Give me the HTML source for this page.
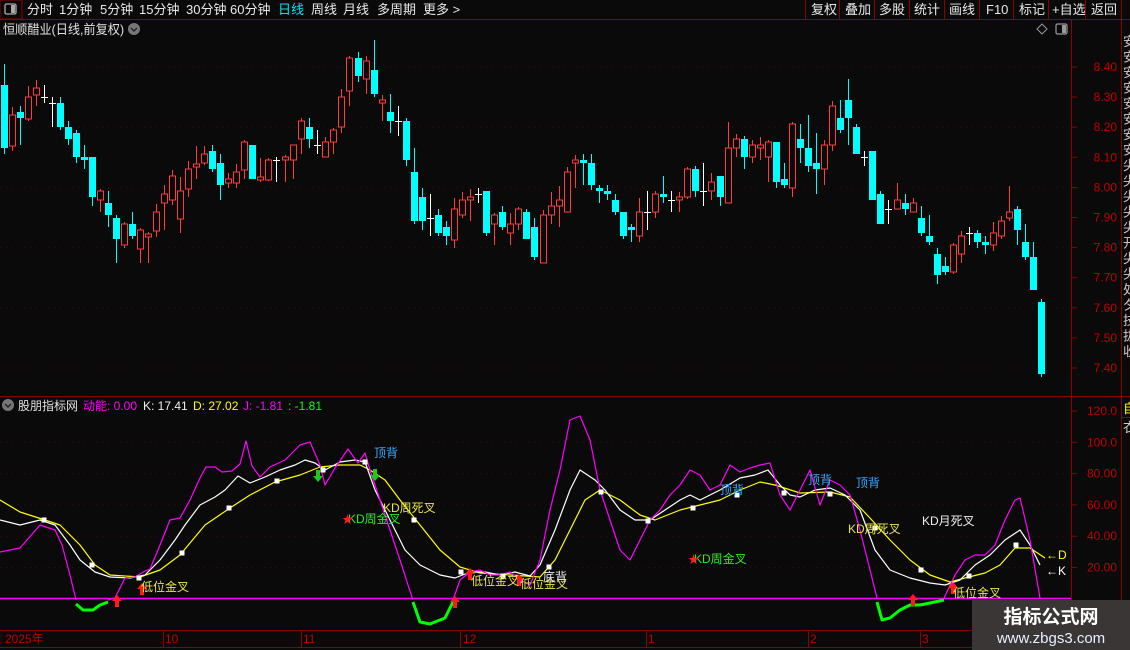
<!DOCTYPE html>
<html><head><meta charset="utf-8">
<style>
*{margin:0;padding:0;box-sizing:border-box}
body{width:1130px;height:650px;background:#0a0a0a;overflow:hidden;font-family:"Liberation Sans","Noto Sans CJK SC",sans-serif;position:relative;color:#ddd}
svg{position:absolute;left:0;top:0}
</style></head><body>
<svg id="s" width="1130" height="650" xmlns="http://www.w3.org/2000/svg" font-family="Liberation Sans, Noto Sans CJK SC, sans-serif">
<rect x="0" y="0" width="1130" height="19" fill="#0a0a0a"/>
<line x1="0" y1="19.5" x2="1130" y2="19.5" stroke="#8b0000"/>
<rect x="0" y="0" width="22" height="19" fill="none" stroke="#8b0000"/>
<rect x="5" y="4" width="11" height="10" rx="1.5" fill="none" stroke="#aaa" stroke-width="1.3"/>
<rect x="11" y="5" width="4" height="8" fill="#aaa"/>
<g font-size="13" fill="#e8e8e8">
<text x="27" y="14">分时</text><text x="59" y="14">1分钟</text><text x="100" y="14">5分钟</text>
<text x="139" y="14">15分钟</text><text x="186" y="14">30分钟</text><text x="230" y="14">60分钟</text>
<text x="278" y="14" fill="#00e5ff">日线</text><text x="311" y="14">周线</text><text x="343" y="14">月线</text>
<text x="377" y="14">多周期</text><text x="423" y="14">更多 &gt;</text>
</g>
<g stroke="#8b0000"><line x1="805.5" y1="0" x2="805.5" y2="19"/><line x1="839.5" y1="0" x2="839.5" y2="19"/><line x1="874.5" y1="0" x2="874.5" y2="19"/><line x1="909.5" y1="0" x2="909.5" y2="19"/><line x1="944.5" y1="0" x2="944.5" y2="19"/><line x1="979.5" y1="0" x2="979.5" y2="19"/><line x1="1013.5" y1="0" x2="1013.5" y2="19"/><line x1="1048.5" y1="0" x2="1048.5" y2="19"/><line x1="1085.5" y1="0" x2="1085.5" y2="19"/><line x1="1121.5" y1="0" x2="1121.5" y2="19"/></g>
<g font-size="13" fill="#e8e8e8">
<text x="811" y="14">复权</text><text x="845" y="14">叠加</text><text x="879" y="14">多股</text><text x="914" y="14">统计</text><text x="949" y="14">画线</text><text x="986" y="14">F10</text><text x="1019" y="14">标记</text><text x="1052" y="14">+自选</text><text x="1091" y="14">返回</text>
</g>
<text x="3" y="34" font-size="13" fill="#e0e0e0" textLength="121" lengthAdjust="spacingAndGlyphs">恒顺醋业(日线,前复权)</text>
<circle cx="134" cy="29" r="6" fill="#777"/><path d="M131 28l3 3 3-3" stroke="#222" stroke-width="1.4" fill="none"/>
<path d="M1042 24l5 5-5 5-5-5z" stroke="#999" fill="none"/>
<rect x="1056" y="24" width="11" height="10" rx="1.5" fill="none" stroke="#999" stroke-width="1.2"/><rect x="1062" y="25" width="4" height="8" fill="#999"/>
<line x1="1071.5" y1="19" x2="1071.5" y2="650" stroke="#8b0000"/>
<line x1="1121.5" y1="20" x2="1121.5" y2="650" stroke="#8b0000"/>
<g id="pax" font-size="12" fill="#c00000"></g>
<g font-size="13" fill="#ccc" id="rs"></g>
<line x1="0" y1="396.5" x2="1130" y2="396.5" stroke="#8b0000"/>
<circle cx="8" cy="405" r="6" fill="#777"/><path d="M5 404l3 3 3-3" stroke="#222" stroke-width="1.4" fill="none"/>
<g font-size="12">
<text x="18" y="410" fill="#e0e0e0">股朋指标网</text>
<text x="83" y="410" fill="#ff00ff">动能: 0.00</text>
<text x="143" y="410" fill="#eee">K: 17.41</text>
<text x="193" y="410" fill="#ffff00">D: 27.02</text>
<text x="243" y="410" fill="#ff00ff">J: -1.81</text>
<text x="288" y="410" fill="#00ff00">: -1.81</text>
</g>
<text x="1123" y="413" font-size="13" fill="#ffff00">自</text>
<line x1="1121" y1="417.5" x2="1130" y2="417.5" stroke="#8b0000"/>
<text x="1123" y="432" font-size="13" fill="#ccc">衣</text>
<g id="g"></g>
<line x1="0" y1="630.5" x2="1071" y2="630.5" stroke="#8b0000"/>
<line x1="0" y1="647.5" x2="1071" y2="647.5" stroke="#8b0000"/>
<g font-size="12" fill="#c00000">
<text x="5" y="643">2025年</text><text x="165" y="643">10</text><text x="303" y="643">11</text><text x="463" y="643">12</text><text x="648" y="643">1</text><text x="810" y="643">2</text><text x="922" y="643">3</text>
</g>
<g stroke="#8b0000"><line x1="163.5" y1="630" x2="163.5" y2="647"/><line x1="301.5" y1="630" x2="301.5" y2="647"/><line x1="460.5" y1="630" x2="460.5" y2="647"/><line x1="646.5" y1="630" x2="646.5" y2="647"/><line x1="808.5" y1="630" x2="808.5" y2="647"/><line x1="920.5" y1="630" x2="920.5" y2="647"/></g>
<rect x="972" y="600" width="158" height="50" fill="#3a3635"/>
<text x="1051" y="623" font-size="19" font-weight="bold" fill="#fff" text-anchor="middle">指标公式网</text>
<text x="1051" y="643" font-size="15" fill="#e8f0ff" text-anchor="middle">www.zbgs3.com</text>
</svg>
<script>
var NS="http://www.w3.org/2000/svg",s=document.getElementById('g');
function el(t,a,p){var e=document.createElementNS(NS,t);for(var k in a)e.setAttribute(k,a[k]);(p||s).appendChild(e);return e}
var pax=document.getElementById('pax');
for(var i=0;i<11;i++){var y=67+i*30.1;var lab=(8.4-i*0.1).toFixed(2);
 if(i%2==0)el('line',{x1:0,y1:y,x2:1070,y2:y,stroke:'#5a0000','stroke-dasharray':'1 5'});
 el('line',{x1:1072,y1:y,x2:1077,y2:y,stroke:'#8b0000'});
 el('text',{x:1117,y:y+4,'font-size':12,fill:'#c00000','text-anchor':'end'},pax).textContent=lab;}
for(var i=0;i<6;i++){var y=411+i*31.3;var v=(120-i*20);var lab=v>=100?v.toFixed(1):v.toFixed(2);
 if(i>0)el('line',{x1:0,y1:y,x2:1070,y2:y,stroke:'#5a0000','stroke-dasharray':'1 5'});
 el('line',{x1:1072,y1:y,x2:1077,y2:y,stroke:'#8b0000'});
 el('text',{x:1117,y:y+4,'font-size':12,fill:'#c00000','text-anchor':'end'},pax).textContent=lab;}
var rs=document.getElementById('rs');var ch="安安安安安安安安尖尖尖尖尖开尖尖处夕技抜收";
for(var i=0;i<ch.length;i++){el('text',{x:1123,y:46+i*15.5},rs).textContent=ch[i];}
var C=[[4,85,148,64,154,'c'],[12,115,146,107,151,'r'],[20,112,118,106,145,'c'],[28,97,119,86,121,'r'],[36,88,95,80,106,'r'],[44,97,97,85,103,'w'],[52,103,103,97,127,'w'],[60,103,127,97,130,'c'],[68,127,139,121,145,'c'],[76,133,157,130,163,'c'],[84,157,160,145,169,'c'],[92,157,197,157,206,'c'],[100,191,200,189,212,'r'],[108,203,215,191,227,'c'],[116,218,239,215,263,'c'],[124,224,245,222,248,'r'],[132,224,236,212,239,'c'],[140,230,249,228,263,'r'],[148,234,237,232,263,'r'],[156,212,231,204,237,'r'],[164,194,203,185,230,'r'],[172,176,200,170,205,'r'],[180,191,219,177,233,'r'],[188,169,189,161,197,'r'],[196,164,167,146,179,'r'],[204,154,163,146,165,'r'],[212,151,169,145,172,'c'],[220,163,185,154,200,'c'],[228,179,183,173,188,'r'],[236,172,183,164,188,'r'],[244,142,170,140,179,'r'],[252,145,179,145,179,'c'],[260,177,180,158,182,'r'],[268,160,180,158,181,'r'],[276,160,160,157,182,'w'],
[285,157,160,155,182,'r'],[293,145,160,145,179,'r'],[301,121,139,118,154,'r'],[309,127,139,118,148,'c'],[317,145,145,130,154,'w'],[325,142,157,137,157,'r'],[333,130,142,128,154,'r'],[341,97,127,89,133,'r'],[349,58,91,56,106,'r'],[358,58,76,52,82,'c'],[366,61,79,56,94,'r'],[374,70,94,40,97,'c'],[382,100,103,95,121,'r'],[390,112,121,94,133,'c'],[398,121,121,106,136,'w'],[406,121,160,118,166,'c'],[414,172,221,148,224,'c'],[422,197,221,188,230,'c'],[430,218,218,194,236,'w'],[438,215,233,209,236,'c'],[446,227,236,221,245,'c'],[454,209,240,198,248,'r'],[462,200,215,192,218,'r'],[470,197,200,189,221,'r'],[478,194,194,188,203,'w'],[486,191,233,191,236,'c'],[494,215,224,213,245,'r'],[502,212,227,206,230,'c'],[510,224,233,213,245,'r'],[518,209,224,207,230,'r'],[526,212,239,209,239,'c'],[534,227,257,218,260,'c'],[543,215,263,210,263,'r'],[551,206,215,192,224,'r'],[559,200,206,186,227,'r'],[567,172,212,167,212,'r'],[575,160,163,155,188,'r'],
[583,160,163,154,185,'c'],[591,163,185,154,190,'c'],[599,188,191,185,203,'c'],[607,191,194,185,200,'c'],[615,200,212,194,215,'c'],[623,212,236,212,239,'c'],[631,227,230,224,242,'c'],[639,212,236,198,242,'r'],[647,212,212,191,230,'w'],[655,194,212,191,218,'r'],[663,194,197,176,203,'c'],[671,200,200,191,212,'w'],[679,197,200,192,212,'r'],[687,169,197,167,199,'r'],[695,169,191,166,197,'c'],[703,191,191,163,206,'w'],[711,182,191,173,200,'r'],[720,176,197,176,206,'c'],[728,148,203,122,203,'r'],[736,139,148,134,157,'r'],[744,139,157,136,169,'c'],[752,145,157,140,163,'r'],[760,145,148,137,160,'r'],[768,142,157,140,182,'r'],[776,142,182,142,188,'c'],[784,179,185,163,188,'c'],[792,124,188,122,197,'r'],[800,139,148,124,163,'c'],[808,148,166,115,172,'c'],[816,163,169,133,194,'c'],[824,145,169,140,185,'r'],[832,106,145,101,151,'r'],[840,118,130,100,133,'c'],[848,100,118,79,145,'c'],[856,127,154,124,154,'c'],[864,157,157,151,166,'w'],[872,151,200,151,200,'c'],[880,194,224,191,224,'c'],[888,209,209,200,224,'w'],[897,200,209,183,209,'r'],[905,203,209,194,215,'c'],[913,203,212,198,212,'r'],[921,218,233,206,236,'c'],[929,236,242,215,245,'c'],[937,254,275,248,284,'c'],[945,266,272,257,275,'c'],[953,245,272,243,274,'r'],[961,236,254,231,263,'r'],[969,233,233,227,245,'w'],[977,233,242,230,248,'c'],[985,242,245,236,254,'c'],[993,233,245,222,251,'r'],[1001,221,236,216,239,'r'],[1009,212,218,186,221,'r'],[1017,209,230,206,245,'c'],[1025,242,257,224,260,'c'],[1033,257,290,242,290,'c'],[1041,302,374,299,377,'c']];
C.forEach(function(c){var x=c[0]+0.5,col=c[5]=='c'?'#00ffff':c[5]=='r'?'#ff3c3c':'#ffffff';
 el('line',{x1:x,y1:c[3],x2:x,y2:c[4],stroke:col,'stroke-width':1});
 if(c[5]=='w'){el('line',{x1:x-3.5,y1:c[1]+0.5,x2:x+3.5,y2:c[1]+0.5,stroke:col});return;}
 if(c[5]=='c')el('rect',{x:x-3.5,y:c[1],width:7,height:Math.max(2,c[2]-c[1]),fill:col});
 else el('rect',{x:x-3,y:c[1],width:6,height:Math.max(2,c[2]-c[1]),fill:'#0a0a0a',stroke:col,'stroke-width':1});
});
el('line',{x1:0,y1:598.5,x2:1071,y2:598.5,stroke:'#ff00ff','stroke-width':1.5});
function pl(pts,col,w){el('polyline',{points:pts,fill:'none',stroke:col,'stroke-width':w||1.2,'stroke-linejoin':'round'})}
pl("0,500 20,512 45,520 60,525 80,545 95,565 110,575 140,577 160,570 180,555 205,525 230,508 250,495 275,482 300,475 320,467 340,465 360,465 370,470 385,480 400,500 420,525 440,550 460,567 480,573 510,575 540,577 555,560 570,530 585,500 600,490 620,500 640,515 655,520 680,510 700,505 720,500 740,490 760,482 775,485 800,493 830,492 850,497 870,518 890,540 910,560 930,575 950,582 965,578 985,573 1000,565 1015,548 1030,548 1045,558",'#ffff00');
pl("0,520 20,525 40,520 55,525 70,545 80,560 95,572 110,577 130,578 145,575 160,560 175,540 185,525 200,505 215,497 225,490 238,476 250,483 265,477 280,470 295,465 305,460 315,463 325,470 340,462 355,460 365,462 375,490 390,520 405,550 420,565 440,575 455,578 470,572 485,572 500,575 515,572 530,576 540,565 555,530 570,490 580,470 595,480 605,490 620,510 635,520 650,520 665,510 680,500 690,495 700,500 720,490 740,478 755,475 768,470 780,485 790,495 800,497 815,490 830,488 845,495 860,510 875,550 890,570 910,578 930,583 945,585 960,580 975,565 990,555 1005,540 1020,530 1030,545 1040,565",'#ffffff');
pl("0,552 20,548 40,525 55,530 62,545 70,575 76,600",'#ff00ff');
pl("76,604 83,610 93,610 100,605 108,602",'#00ff00',3);
pl("108,600 115,598 125,578 135,577 145,571 150,569 160,545 170,520 180,518 190,500 200,478 206,467 215,467 222,472 232,471 240,464 246,441 252,466 260,477 270,467 285,460 300,445 310,442 320,465 325,485 335,468 348,449 358,463 365,453 370,470 380,500 390,530 400,560 408,585 413,600",'#ff00ff');
pl("413,602 420,622 430,624 445,618 453,602",'#00ff00',3);
pl("453,600 460,580 470,572 480,570 490,575 500,575 510,572 520,580 530,585 540,560 550,510 560,470 570,420 580,416 590,440 600,490 610,520 620,550 630,560 640,540 650,520 660,510 670,495 680,485 690,470 700,475 710,490 720,485 730,465 740,472 750,468 760,465 770,463 780,495 790,510 800,490 810,470 820,505 830,480 840,485 850,495 860,530 870,570 877,598",'#ff00ff');
pl("877,602 882,620 890,618 900,610 910,605 920,605 930,603 944,600",'#00ff00',3);
pl("944,598 955,575 965,560 975,555 985,555 995,545 1005,520 1015,500 1020,498 1030,540 1040,598",'#ff00ff');
[[44,520],[92,565],[139,578],[182,553],[229,508],[277,481],[323,470],[365,462],[414,520],[461,572],[503,576],[549,567],[601,492],[648,521],[693,508],[737,495],[784,493],[830,494],[875,528],[921,570],[969,576],[1016,545]].forEach(function(p){el('rect',{x:p[0]-2.5,y:p[1]-2.5,width:5,height:5,fill:'#fff'})});
function up(x,y){el('path',{d:'M'+x+' '+y+'l-5 6h3v6h4v-6h3z',fill:'#ff1a1a'})}
function dn(x,y){el('path',{d:'M'+x+' '+(y+12)+'l-5-6h3v-6h4v6h3z',fill:'#1ec81e'})}
[[117,595],[142,583],[455,596],[470,568],[519,574],[913,594],[953,582]].forEach(function(p){up(p[0],p[1])});
dn(318,470);dn(375,469);
function t(x,y,s,c,f){el('text',{x:x,y:y,fill:c,'font-size':f||12}).textContent=s}
t(141,591,'低位金叉','#e5e54c');t(471,585,'低位金叉','#e5e54c');t(520,588,'低位金叉','#e5e54c');t(543,581,'底背','#e8e8e8');t(953,597,'低位金叉','#e5e54c');
t(374,457,'顶背','#3aa8ff');t(720,494,'顶背','#3aa8ff');t(808,484,'顶背','#3aa8ff');t(856,487,'顶背','#3aa8ff');
t(383,512,'KD周死叉','#e5e54c');t(848,533,'KD周死叉','#e5e54c');t(922,525,'KD月死叉','#eeeeee');
t(348,523,'KD周金叉','#22ee22');t(694,563,'KD周金叉','#22ee22');
t(342,523,'★','#ff2020',11);t(688,563,'★','#ff2020',11);
t(1046,559,'←D','#ffff00');t(1046,575,'←K','#ffffff');
</script>
</body></html>
